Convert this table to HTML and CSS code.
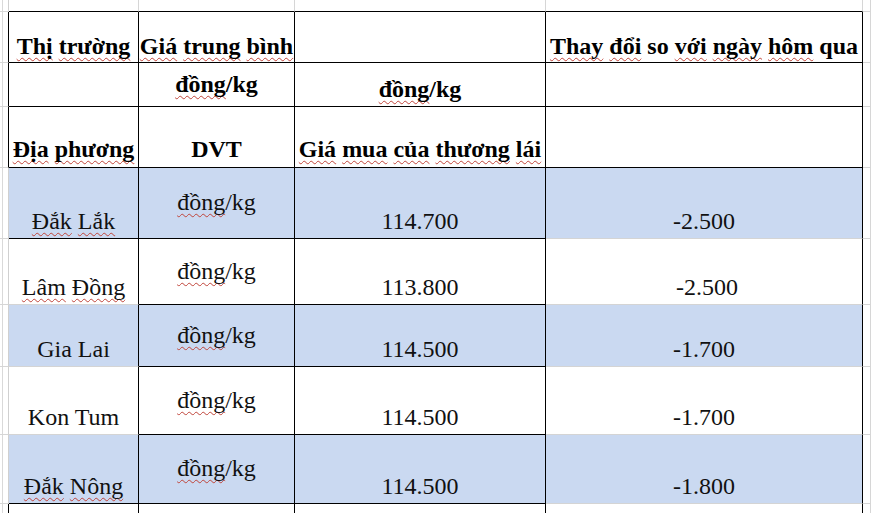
FILE: index.html
```html
<!DOCTYPE html>
<html lang="vi">
<head>
<meta charset="utf-8">
<title>Giá cà phê</title>
<link rel="stylesheet" href="styles.css">
</head>
<body>
<div class="sheet">
  <!-- top gutter row -->
  <div class="g gl"></div>
  <div class="g gt"></div>
  <div class="g gt"></div>
  <div class="g gt"></div>
  <div class="g gt"></div>
  <div class="g gr"></div>

  <!-- header row 1 -->
  <div class="g gl hl"></div>
  <div class="c b bk h1"><span class="sp">Thị</span>&nbsp;<span class="sp">trường</span></div>
  <div class="c b bk h1"><span class="sp">Giá</span>&nbsp;<span class="sp">trung</span>&nbsp;<span class="sp">bình</span></div>
  <div class="c b bk h1"></div>
  <div class="c b bk h1"><span class="sp">Thay</span>&nbsp;<span class="sp">đổi</span>&nbsp;so&nbsp;<span class="sp">với</span>&nbsp;<span class="sp">ngày</span>&nbsp;<span class="sp">hôm</span>&nbsp;qua</div>
  <div class="g gr"></div>

  <!-- header row 2 -->
  <div class="g gl hl"></div>
  <div class="c b bk"></div>
  <div class="c b bk h2a"><span class="sp">đồng</span>/kg</div>
  <div class="c b bk h2b"><span class="sp">đồng</span>/kg</div>
  <div class="c b bk"></div>
  <div class="g gr"></div>

  <!-- header row 3 -->
  <div class="g gl hl"></div>
  <div class="c b bk h3"><span class="sp">Địa</span>&nbsp;<span class="sp">phương</span></div>
  <div class="c b bk h3">DVT</div>
  <div class="c b bk h3"><span class="sp">Giá</span>&nbsp;<span class="sp">mua</span>&nbsp;<span class="sp">của</span>&nbsp;<span class="sp">thương</span>&nbsp;<span class="sp">lái</span></div>
  <div class="c b bk h3"></div>
  <div class="g gr"></div>

  <!-- Đắk Lắk -->
  <div class="g gl"></div>
  <div class="c d blue bk"><span class="sp">Đắk</span>&nbsp;<span class="sp">Lắk</span></div>
  <div class="c m blue bk"><span class="sp">đồng</span>/kg</div>
  <div class="c d blue bk">114.700</div>
  <div class="c d blue last">-2.500</div>
  <div class="g gr"></div>

  <!-- Lâm Đồng -->
  <div class="g gl"></div>
  <div class="c d lite"><span class="sp">Lâm</span>&nbsp;<span class="sp">Đồng</span></div>
  <div class="c m bk"><span class="sp">đồng</span>/kg</div>
  <div class="c d bk">113.800</div>
  <div class="c d last shift">-2.500</div>
  <div class="g gr"></div>

  <!-- Gia Lai -->
  <div class="g gl"></div>
  <div class="c d blue lite">Gia Lai</div>
  <div class="c m blue bk"><span class="sp">đồng</span>/kg</div>
  <div class="c d blue bk">114.500</div>
  <div class="c d blue last">-1.700</div>
  <div class="g gr"></div>

  <!-- Kon Tum -->
  <div class="g gl"></div>
  <div class="c d lite">Kon Tum</div>
  <div class="c m bk"><span class="sp">đồng</span>/kg</div>
  <div class="c d bk">114.500</div>
  <div class="c d last">-1.700</div>
  <div class="g gr"></div>

  <!-- Đắk Nông -->
  <div class="g gl"></div>
  <div class="c d blue bk"><span class="sp">Đắk</span>&nbsp;<span class="sp">Nông</span></div>
  <div class="c m blue bk"><span class="sp">đồng</span>/kg</div>
  <div class="c d blue bk">114.500</div>
  <div class="c d blue last">-1.800</div>
  <div class="g gr"></div>

  <!-- next row (cut off) -->
  <div class="g gl hl"></div>
  <div class="c bk"></div>
  <div class="c bk"></div>
  <div class="c bk"></div>
  <div class="c last"></div>
  <div class="g gr"></div>
</div>
</body>
</html>
```

FILE: styles.css
```css
html, body {
  margin: 0;
  padding: 0;
  background: #ffffff;
  overflow: hidden;
}

.sheet {
  display: grid;
  grid-template-columns: 9px 130px 156px 251px 317px 8px;
  grid-template-rows: 12px 51px 44px 61px 71px 66px 62px 68px 69px 40px;
  font-family: "Liberation Serif", "Times New Roman", serif;
  font-size: 24px;
  line-height: 26px;
  color: #111111;
}

.sheet > div {
  box-sizing: border-box;
}

/* gutter / gridline cells */
.g {
  border-right: 1px solid #d6d6d6;
  border-bottom: 1px solid #d6d6d6;
}
.gl {
  border-right-color: #d0d0d0;
  background: linear-gradient(to right, transparent 2px, #d9d9d9 2px, #d9d9d9 3px, transparent 3px);
}
.hl {
  border-right-color: #000000;
}
.gt {
  border-right: 1px solid #d6d6d6;
  border-bottom: 1px solid #000000;
}
.gr {
  border-right: 1px solid #d6d6d6;
  border-bottom: 1px solid #d6d6d6;
}

/* table cells */
.c {
  display: flex;
  justify-content: center;
  align-items: flex-end;
  white-space: nowrap;
  text-align: center;
  border-right: 1px solid #000000;
  border-bottom: 1px solid #000000;
}
.bk {
  border-bottom-color: #000000;
}
.lite {
  border-bottom-color: #d4d4d4;
}
.last {
  border-bottom-color: #d4d4d4;
}

.b {
  font-weight: bold;
  color: #000000;
}
.h1 { padding-bottom: 3px; }
.h2a { padding-bottom: 9px; }
.h2b { padding-bottom: 4px; }
.h3 { padding-bottom: 5px; }

.d { padding-bottom: 4px; }
.m { align-items: center; padding-bottom: 2px; }
.shift { padding-left: 6px; }

.blue {
  background: #cad9f1;
}

/* spell-check squiggle */
.sp {
  text-decoration-line: underline;
  text-decoration-style: wavy;
  text-decoration-color: #c0443a;
  text-decoration-thickness: 1px;
  text-underline-offset: 3px;
  text-decoration-skip-ink: none;
}
```
